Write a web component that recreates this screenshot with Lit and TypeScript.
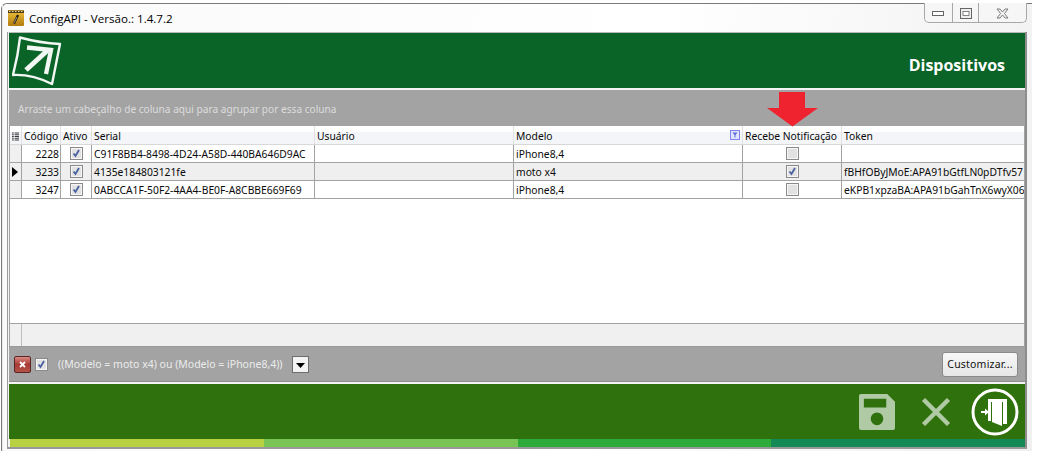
import { LitElement, html, css, svg } from "lit";
import { customElement } from "lit/decorators.js";

const cols = [
  { key: "ind", w: 12 },
  { key: "cod", w: 39, label: "Código" },
  { key: "ativo", w: 31, label: "Ativo" },
  { key: "serial", w: 223, label: "Serial" },
  { key: "user", w: 199, label: "Usuário" },
  { key: "modelo", w: 229, label: "Modelo" },
  { key: "rec", w: 99, label: "Recebe Notificação" },
  { key: "token", w: 182, label: "Token" },
];
const tpl = cols.map((c) => c.w + "px").join(" ");

const rows = [
  { cod: "2228", ativo: true, serial: "C91F8BB4-8498-4D24-A58D-440BA646D9AC", modelo: "iPhone8,4", rec: false, token: "", sel: false },
  { cod: "3233", ativo: true, serial: "4135e184803121fe", modelo: "moto x4", rec: true, token: "fBHfOByJMoE:APA91bGtfLN0pDTfv57", sel: true },
  { cod: "3247", ativo: true, serial: "0ABCCA1F-50F2-4AA4-BE0F-A8CBBE669F69", modelo: "iPhone8,4", rec: false, token: "eKPB1xpzaBA:APA91bGahTnX6wyX06", sel: false },
];

const check = (on: boolean) => html`<svg class="cb" width="13" height="13" viewBox="0 0 13 13">
  <rect x=".5" y=".5" width="12" height="12" fill="#f6f6f6" stroke="#8a8a8a"/>
  <rect x="2" y="2" width="9" height="9" fill="#e2e2e2"/>
  ${on ? svg`<path d="M3.500 6.500l2 2.500 3.500-6" fill="none" stroke="#47609f" stroke-width="1.800"/>` : ""}
</svg>`;

@customElement("app-root")
export class AppRoot extends LitElement {
  static styles = css`
    :host { display: block; width: 1038px; height: 451px; overflow: hidden; background: #fff;
      font-family: "Noto Sans", sans-serif; font-size: 10.3px; color: #0a0a0a; }
    * { box-sizing: border-box; }
    .win { position: relative; width: 1031px; height: 448px; margin: 3px 0 0 1px; border: 1px solid #7a7a7a; border-right: 0; border-bottom: 0;
      border-radius: 6px 0 0 0; padding: 0 0 0 5px; background: linear-gradient(100deg, #fafafa 0%, #ffffff 60%, #f0f0f0 100%); }
    .win::before { content: ""; position: absolute; left: 0; top: 0; bottom: 0; width: 1px; background: #e9e9e9; }
    .title { height: 28px; display: flex; align-items: center; gap: 5px; padding-left: 1px; font-family: "Open Sans", sans-serif; font-size: 11.6px; color: #000; }
    .wbtns { position: absolute; left: 922px; top: -1px; width: 103px; height: 20px; display: flex; background: #f6f6f6;
      border: 1px solid #a8a8a8; border-top: 0; border-radius: 0 0 5px 5px; }
    .wb { display: flex; align-items: center; justify-content: center; border-right: 1px solid #a8a8a8; height: 100%; padding-top: 2px; }
    .wb:last-child { border-right: 0; }
    .panel { width: 1020px; height: 417px; border: 1px solid #9a9a9a; border-top: 0; border-right: 2px solid #8d8d8d; border-bottom: 2px solid #999; padding: 0 0 0 1px; background: #f4f4f4; }
    .head { height: 56px; background: #0b6427; display: flex; align-items: center; justify-content: space-between; padding: 0 20px 0 3px;
      border-top: 1px solid #b9b9b9; color: #fff; }
    .head h1 { margin: 0; font: bold 16px "Open Sans", sans-serif; position: relative; top: 4px; }
    .band { position: relative; height: 36px; margin-top: 2px; background: #a3a3a3; color: #dcdcdc; padding: 12px 0 0 9px; line-height: 14px; font-size: 10.15px; }
    .arrow { position: absolute; left: 758px; top: 2px; }
    .grid-wrap { background: #a3a3a3; padding: 0 1px; }
    .table { background: #fff; height: 198px; border-bottom: 1px solid #a3a3a3; }
    .row { display: grid; grid-template-columns: ${css([tpl] as unknown as TemplateStringsArray)}; height: 18px; border-bottom: 1px solid #a3a3a3; }
    .row.hd { height: 19px; background: linear-gradient(#fff 0 35%, #f3f5f8 35%); border-bottom: 1px solid #d8d8d8; }
    .row.sel { background: #efefef; }
    .c { display: flex; align-items: center; padding: 0 2px; border-right: 1px solid #a3a3a3; white-space: nowrap; overflow: hidden; }
    .hd .c { border-right: 1px solid #e2e2e2; padding-left: 2px; position: relative; padding-top: 2px; }
    .c:last-child { border-right: 0; }
    .c.ind { background: #f0f0f0; padding: 0 0 0 2px; }
    .c.num { justify-content: flex-end; padding-right: 1px; }
    .c.mid { justify-content: center; }
    .filter-i { position: absolute; right: 2px; top: 4px; }
    .foot { height: 22px; background: #f0f0f0; display: flex; }
    .foot i { width: 12px; border-right: 1px solid #bdbdbd; }
    .fbar { height: 36px; background: #a3a3a3; display: flex; align-items: center; padding: 0 7px 0 5px; border-top: 1px solid #9a9a9a; border-bottom: 1px solid #8f8f8f; color: #ececec; font-size: 10.5px; }
    .xbtn { width: 17px; height: 17px; border: 1px solid #5b2428; border-radius: 2px; background: linear-gradient(#d98a80, #a93a33 50%, #b45348); display: flex; align-items: center; justify-content: center; margin-right: 4px; }
    .fbar .cb { margin-right: 10px; }
    .ddl { width: 17px; height: 17px; margin-left: 9px; border: 1px solid #6d6d6d; background: #f3f3f3; display: flex; align-items: center; justify-content: center; padding-top: 3px; }
    .cust { margin-left: auto; width: 76px; height: 25px; border: 1px solid #8a8a8a; border-radius: 3px; background: linear-gradient(#f8f8f8, #e6e6e6); display: flex; align-items: center; justify-content: center; color: #111; letter-spacing: .2px; }
    .bottom { margin-top: 2px; height: 55px; background: #2f710c; display: flex; justify-content: flex-end; align-items: center; gap: 20px; padding: 0 6px 0 0; }
    .stripes { display: flex; height: 8px; margin-left: 1px; }
    .stripes div { flex: 1; }
    .s1 { background: #b8d143; } .s2 { background: #7ac355; } .s3 { background: #2dab3a; } .s4 { background: #138a55; }
  `;

  render() {
    return html`<div class="win">
      <div class="title">
        <svg width="16" height="16" viewBox="0 0 16 16">
          <defs><linearGradient id="g" x1="0" y1="0" x2="0" y2="1"><stop offset="0" stop-color="#f3c33d"/><stop offset="1" stop-color="#b07a10"/></linearGradient></defs>
          <rect width="16" height="16" rx="1" fill="url(#g)"/>
          <path d="M0 .5h16v2.500H0z" fill="#4a3a1a"/>
          <path d="M1 1.500h1.500M4 1.500h1.500M7 1.500h1.500M10 1.500h1.500M13 1.500h1.500" stroke="#e9d9a0"/>
          <path d="M6 13.500L10 5" stroke="#1e1608" stroke-width="2.200"/>
          <path d="M6 13L9 7" stroke="#eee" stroke-width=".6"/>
        </svg>
        <span>ConfigAPI - Versão.: 1.4.7.2</span>
      </div>
      <div class="wbtns">
        <div class="wb" style="width:28px">
          <svg width="12" height="6" viewBox="0 0 12 6"><rect x=".5" y=".5" width="11" height="4" fill="#fff" stroke="#666"/></svg>
        </div>
        <div class="wb" style="width:27px">
          <svg width="12" height="12" viewBox="0 0 12 12"><rect x=".5" y=".5" width="11" height="10" fill="#eee" stroke="#666"/><rect x="3" y="3.500" width="6" height="4" fill="#fff" stroke="#666" stroke-width=".8"/></svg>
        </div>
        <div class="wb" style="width:47px">
          <svg width="13" height="11" viewBox="0 0 13 11"><path d="M1 1h3l2.500 3L9 1h3L8.500 5.500 12 10H9L6.500 7 4 10H1l3.500-4.500z" fill="#f2f2f2" stroke="#707070" stroke-width=".9"/></svg>
        </div>
      </div>
      <div class="panel">
        <div class="head">
          <svg width="50" height="50" viewBox="0 0 50 50">
            <path d="M8 1.500Q28 7 48 8 44 28 40 48 20 38 1 39 6 20 8 1.500z" fill="none" stroke="#f2f7f3" stroke-width="2.400" stroke-linejoin="round"/>
            <path d="M14 34L36 14" stroke="#f2f7f3" stroke-width="5"/>
            <path d="M15 11.500L39 14 34 38" fill="none" stroke="#f2f7f3" stroke-width="4.300"/>
          </svg>
          <h1>Dispositivos</h1>
        </div>
        <div class="band">Arraste um cabeçalho de coluna aqui para agrupar por essa coluna
          <svg class="arrow" width="52" height="35" viewBox="0 0 52 35"><path d="M12 0h26v16h13L25.500 34.500 0 16h12z" fill="#ef2330"/></svg>
        </div>
        <div class="grid-wrap">
          <div class="table">
            <div class="row hd">
              ${cols.map((c) => html`<div class="c">
                ${c.key === "ind"
                  ? html`<svg width="8" height="9" viewBox="0 0 8 9"><path d="M0 .5h2M3 .5h5M0 2.500h2M3 2.500h5M0 4.500h2M3 4.500h5M0 6.500h2M3 6.500h5M0 8.500h2M3 8.500h5" stroke="#222"/></svg>`
                  : c.label}
                ${c.key === "modelo"
                  ? html`<svg class="filter-i" width="10" height="10" viewBox="0 0 10 10"><rect x=".5" y=".5" width="9" height="9" fill="#dfe3ff" stroke="#7d85e8"/><path d="M2.500 2.500h5L5.500 5v2.500h-1V5z" fill="#5f68dc"/></svg>`
                  : ""}
              </div>`)}
            </div>
            ${rows.map((r) => html`<div class="row ${r.sel ? "sel" : ""}">
              <div class="c ind">${r.sel ? html`<svg width="6" height="10" viewBox="0 0 6 10"><path d="M0 0l6 5-6 5z" fill="#000"/></svg>` : ""}</div>
              <div class="c num">${r.cod}</div>
              <div class="c mid">${check(r.ativo)}</div>
              <div class="c">${r.serial}</div>
              <div class="c"></div>
              <div class="c">${r.modelo}</div>
              <div class="c mid">${check(r.rec)}</div>
              <div class="c">${r.token}</div>
            </div>`)}
          </div>
          <div class="foot"><i></i></div>
        </div>
        <div class="fbar">
          <div class="xbtn"><svg width="7" height="7" viewBox="0 0 7 7"><path d="M1 1l5 5M6 1L1 6" stroke="#fff" stroke-width="1.800"/></svg></div>
          ${check(true)}
          <span>((Modelo = moto x4) ou (Modelo = iPhone8,4))</span>
          <div class="ddl"><svg width="9" height="5" viewBox="0 0 9 5"><path d="M0 0h9L4.500 5z" fill="#000"/></svg></div>
          <div class="cust">Customizar...</div>
        </div>
        <div class="bottom">
          <svg width="36" height="36" viewBox="0 0 37 37"><path fill="#b0caa6" fill-rule="evenodd" d="M2 0h27l8 8v27a2 2 0 0 1-2 2H2a2 2 0 0 1-2-2V2a2 2 0 0 1 2-2zM5 5v9h23V5zM18.500 19a6.500 6.500 0 1 0 0 13 6.500 6.500 0 0 0 0-13z"/></svg>
          <svg width="30" height="30" viewBox="0 0 30 30" style="margin-left:6px"><path d="M2.500 2.500l25 25M27.500 2.500l-25 25" stroke="#b0caa6" stroke-width="4.500"/></svg>
          <svg width="48" height="48" viewBox="0 0 48 48">
            <circle cx="24" cy="24" r="22" fill="none" stroke="#fff" stroke-width="3"/>
            <path fill="#fff" d="M17 11h19v25h-4V14H20v19h-3zM21 14h10v24l-10-4z"/>
            <path d="M10 24h6" stroke="#fff" stroke-width="2"/><path d="M14 20.500v7l4-3.500z" fill="#fff"/>
          </svg>
        </div>
        <div class="stripes"><div class="s1"></div><div class="s2"></div><div class="s3"></div><div class="s4"></div></div>
      </div>
    </div>`;
  }
}
